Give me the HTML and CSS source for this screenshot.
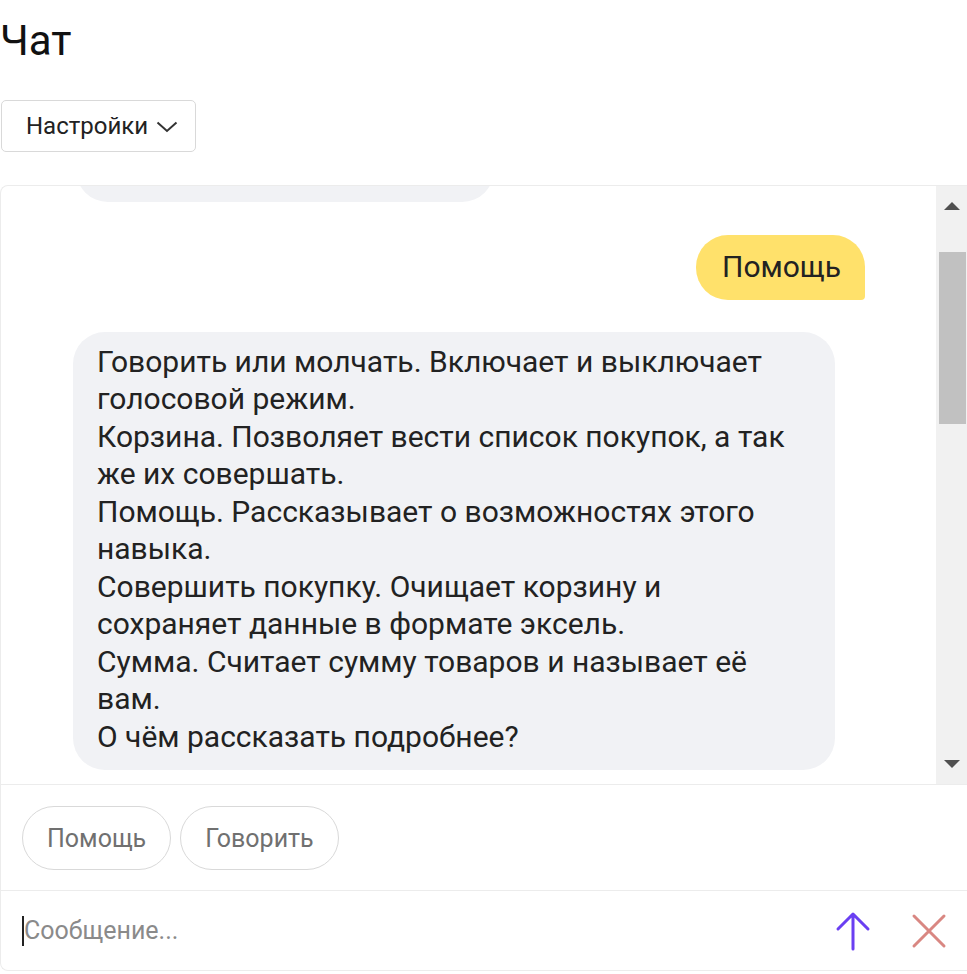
FILE: index.html
```html
<!DOCTYPE html>
<html lang="ru">
<head>
<meta charset="utf-8">
<title>Чат</title>
<link rel="stylesheet" href="styles.css">
</head>
<body>
<h1 class="title">Чат</h1>
<button class="settings">Настройки<svg class="chev" width="22" height="12" viewBox="0 0 22 12"><path d="M1.5 1.5 L11 10 L20.5 1.5" fill="none" stroke="#333" stroke-width="2"/></svg></button>
<div class="chat">
  <div class="messages">
    <div class="feed">
      <div class="msg bot partial"></div>
      <div class="msg user">Помощь</div>
      <div class="msg bot">Говорить или молчать. Включает и выключает голосовой режим.<br>Корзина. Позволяет вести список покупок, а так же их совершать.<br>Помощь. Рассказывает о возможностях этого навыка.<br>Совершить покупку. Очищает корзину и сохраняет данные в формате эксель.<br>Сумма. Считает сумму товаров и называет её вам.<br>О чём рассказать подробнее?</div>
    </div>
    <div class="scrollbar">
      <div class="sb-btn"><span class="tri up"></span></div>
      <div class="sb-track"><div class="sb-thumb"></div></div>
      <div class="sb-btn"><span class="tri down"></span></div>
    </div>
  </div>
  <div class="suggests">
    <button class="suggest">Помощь</button>
    <button class="suggest">Говорить</button>
  </div>
  <div class="composer">
    <div class="input"><span class="caret"></span><span class="placeholder">Сообщение...</span></div>
    <button class="icon-btn send" aria-label="Отправить"><svg width="36" height="40" viewBox="0 0 36 40"><path d="M18 38 V4 M3 18 L18 3 L33 18" fill="none" stroke="#6a3ff2" stroke-width="3" stroke-linecap="round" stroke-linejoin="round"/></svg></button>
    <button class="icon-btn close" aria-label="Закрыть"><svg width="36" height="36" viewBox="0 0 36 36"><path d="M3 3 L33 33 M33 3 L3 33" fill="none" stroke="#d98782" stroke-width="3" stroke-linecap="round"/></svg></button>
  </div>
</div>
</body>
</html>
```
FILE: styles.css
```css
* { box-sizing: border-box; }
html, body { margin: 0; padding: 0; background: #fff; }
body {
  font-family: Roboto, "Noto Sans", "Liberation Sans", sans-serif;
  color: #222;
  width: 967px;
  overflow: hidden;
}
.title {
  margin: 0;
  padding: 12px 0 0 0;
  font-size: 42px;
  font-weight: 400;
  line-height: 58px;
  color: #111;
  height: 100px;
}
.settings {
  display: flex;
  align-items: center;
  gap: 8px;
  margin-left: 1px;
  height: 52px;
  width: 195px;
  padding: 0 0 0 24px;
  border: 1px solid #d9d9d9;
  border-radius: 5px;
  background: #fff;
  font-family: inherit;
  font-size: 24px;
  color: #222;
}
.chev { margin-top: 2px; }
.chat {
  margin-top: 33px;
  border: 1px solid #ececec;
  border-right: none;
  border-radius: 8px 0 0 8px;
  height: 786px;
  display: flex;
  flex-direction: column;
}
.messages {
  display: flex;
  height: 599px;
  border-bottom: 1px solid #ececec;
}
.feed {
  flex: 1;
  overflow: hidden;
  padding: 0 71px 14px 72px;
  display: flex;
  flex-direction: column;
}
.msg {
  font-size: 30px;
  line-height: 37.5px;
  border-radius: 32px;
}
.bot {
  background: #f1f2f5;
  align-self: flex-start;
  padding: 11px 30px 13px 24px;
  width: 762px;
  height: 439px;
  margin-top: 32px;
  color: #222;
}
.partial {
  width: 418px;
  height: 80px;
  margin-top: -64px;
  margin-left: 3px;
  padding: 0;
}
.user {
  align-self: flex-end;
  background: #ffe16b;
  border-radius: 32px 32px 4px 32px;
  padding: 13px 24px 14px 26px;
  height: 65px;
  margin-top: 33px;
}
.scrollbar {
  width: 31px;
  background: #f1f1f1;
  display: flex;
  flex-direction: column;
}
.sb-btn {
  height: 40px;
  display: flex;
  align-items: center;
  justify-content: center;
}
.tri { width: 0; height: 0; border-left: 8px solid transparent; border-right: 8px solid transparent; }
.tri.up { border-bottom: 8px solid #505050; }
.tri.down { border-top: 8px solid #505050; }
.sb-track { flex: 1; padding: 26px 1px 0 3px; }
.sb-thumb { height: 172px; background: #c1c1c1; }
.suggests {
  display: flex;
  gap: 9px;
  padding: 21px 21px 0 21px;
  height: 106px;
  border-bottom: 1px solid #ececec;
}
.suggest {
  height: 64px;
  padding: 0 24px;
  border: 1px solid #d9d9d9;
  border-radius: 32px;
  background: #fff;
  font-family: inherit;
  font-size: 25px;
  color: #707070;
}
.composer {
  flex: 1;
  display: flex;
  align-items: center;
  padding: 0 20px 0 21px;
}
.input {
  flex: 1;
  display: flex;
  align-items: center;
  font-size: 25px;
  color: #8a8a8a;
}
.caret { width: 2px; height: 30px; background: #222; }
.icon-btn {
  border: none;
  background: none;
  padding: 0;
  display: flex;
  align-items: center;
  justify-content: center;
}
.send { width: 36px; height: 44px; margin-right: 40px; }
.close { width: 36px; height: 36px; }
```
